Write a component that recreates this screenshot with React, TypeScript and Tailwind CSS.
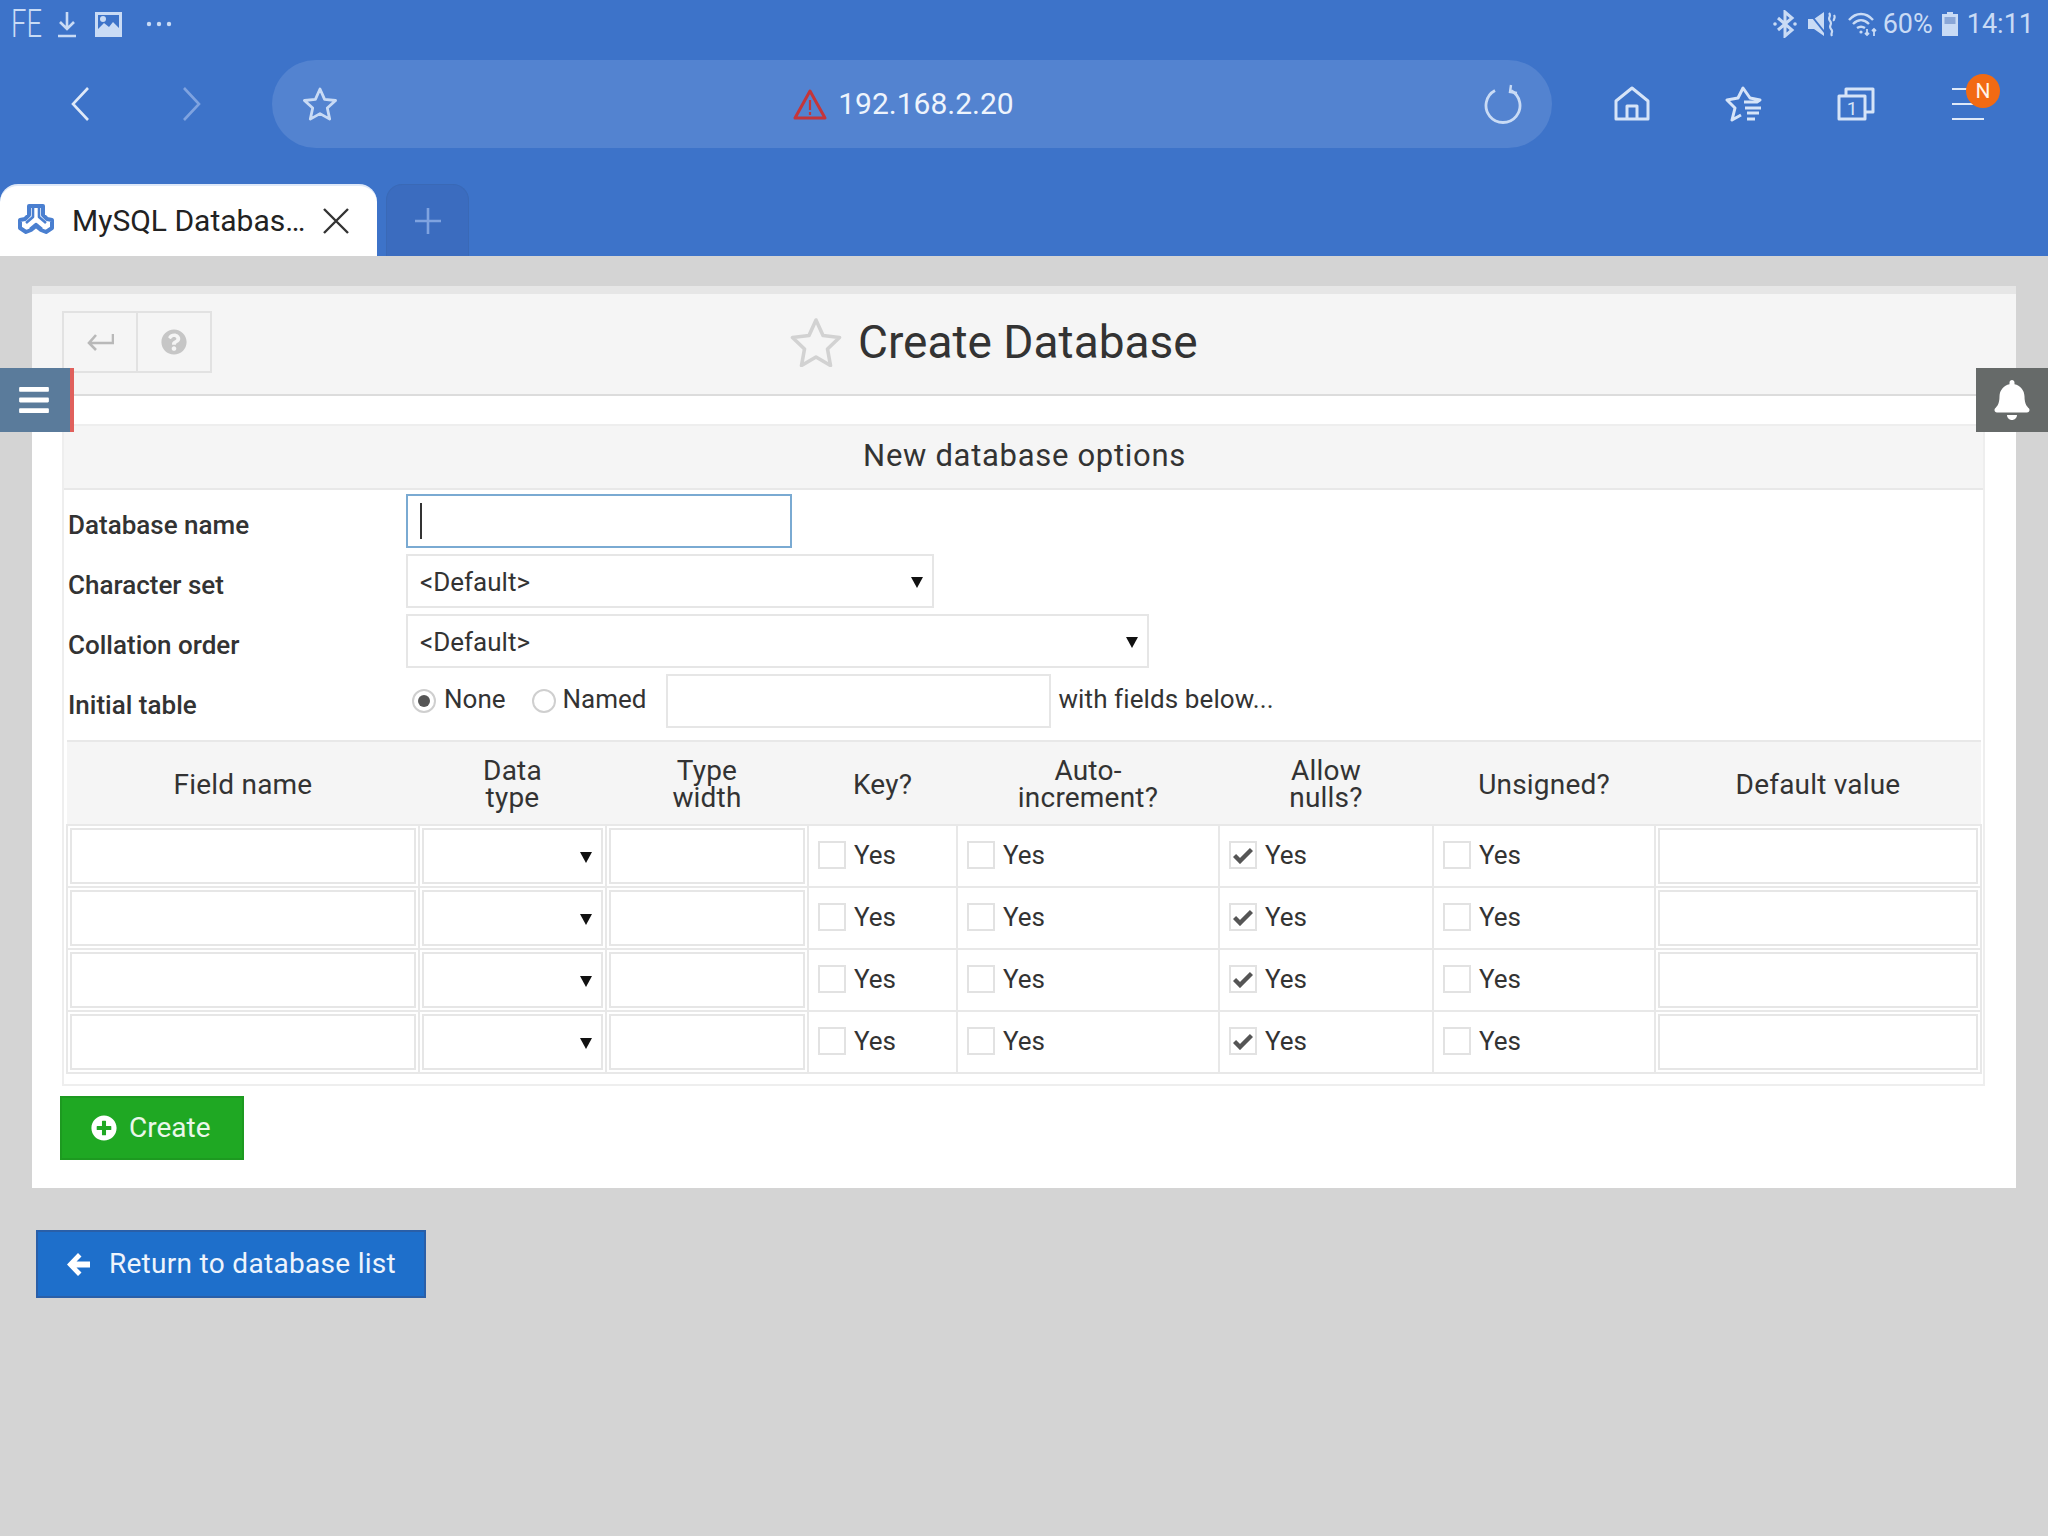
import { FaBars, FaBell, FaPlusCircle, FaQuestionCircle } from "react-icons/fa";

const ICON = "#c9dbf5";

function SelectBox({ text, className }: { text?: string; className: string }) {
    return (
        <div className={`flex items-center justify-between border-2 border-[#e6e6e6] bg-white pl-3 pr-[9px] ${className}`}>
            <span className="mt-[2px] text-[26px] text-[#333]">{text}</span>
            <svg width="12" height="11" viewBox="0 0 12 11" className="mt-[3px]"><path d="M0 0h12L6 11z" fill="#111" /></svg>
        </div>
    );
}

function Yes({ checked }: { checked?: boolean }) {
    return (
        <div className="flex items-center gap-[8px] pb-[2px] pl-[9px]">
            <span className="flex h-[28px] w-[28px] items-center justify-center border-2 border-[#e2e2e2] bg-white">
                {checked && (
                    <svg width="20" height="17" viewBox="0 0 20 17" fill="none" stroke="#555" strokeWidth="4.4"><path d="M1.500 8.500l5.500 5.500L18.500 2.500" /></svg>
                )}
            </span>
            <span className="text-[26px] text-[#333]">Yes</span>
        </div>
    );
}

function Row() {
    return (
        <tr className="h-[62px]">
            <td className="border-2 border-[#e8e8e8] p-[2px]"><input className="block h-[56px] w-full border-2 border-[#e6e6e6] bg-white" /></td>
            <td className="border-2 border-[#e8e8e8] p-[2px]"><SelectBox className="h-[56px] w-full" /></td>
            <td className="border-2 border-[#e8e8e8] p-[2px]"><input className="block h-[56px] w-full border-2 border-[#e6e6e6] bg-white" /></td>
            <td className="border-2 border-[#e8e8e8]"><Yes /></td>
            <td className="border-2 border-[#e8e8e8]"><Yes /></td>
            <td className="border-2 border-[#e8e8e8]"><Yes checked /></td>
            <td className="border-2 border-[#e8e8e8]"><Yes /></td>
            <td className="border-2 border-[#e8e8e8] p-[2px]"><input className="block h-[56px] w-full border-2 border-[#e6e6e6] bg-white" /></td>
        </tr>
    );
}

function Head({ children }: { children: React.ReactNode }) {
    return <th className="border-y-2 border-[#e8e8e8] pt-[2px] text-center text-[28px] leading-[27px] font-normal tracking-[0.2px] text-[#333]">{children}</th>;
}

function StatusBar() {
    return (
        <div className="flex h-[48px] items-center justify-between pl-[11px] pr-[14px] text-[#c9dbf5]">
            <div className="flex items-center">
                <span className="w-[32px] origin-left scale-x-[0.72] text-[38px] leading-none font-light">FE</span>
                <svg width="22" height="28" viewBox="0 0 22 28" className="ml-[13px]" fill="none" stroke={ICON} strokeWidth="2.6">
                    <path d="M11 2v17M4 12l7 7 7-7M2 26h18" />
                </svg>
                <svg width="27" height="25" viewBox="0 0 27 25" className="ml-[17px]">
                    <path fillRule="evenodd" d="M0 0h27v25H0zM3 3v14l6-6 5 4 4-5 6 6V3z" fill={ICON} />
                    <circle cx="8" cy="7" r="3" fill={ICON} />
                </svg>
                <svg width="26" height="6" viewBox="0 0 26 6" className="ml-[24px]" fill={ICON}>
                    <circle cx="3" cy="3" r="2.2" /><circle cx="13" cy="3" r="2.2" /><circle cx="23" cy="3" r="2.2" />
                </svg>
            </div>
            <div className="flex items-center">
                <svg width="24" height="28" viewBox="0 0 24 28" fill="none" stroke={ICON} strokeWidth="3">
                    <path d="M5 8l14 12-7 6V2l7 6L5 20" />
                    <circle cx="2" cy="14" r="1.8" fill={ICON} stroke="none" /><circle cx="22" cy="14" r="1.8" fill={ICON} stroke="none" />
                </svg>
                <svg width="28" height="28" viewBox="0 0 28 28" className="ml-[11px]" fill="none">
                    <path d="M0 9h6l10-7v24l-10-7H0z" fill={ICON} />
                    <path d="M2 4l16 20" stroke="#3d73c9" strokeWidth="2" />
                    <path d="M21 3c3 3-2 5 1 8s-2 5 1 8-1 4 1 7M26 5c2 3-1 4 0 6" stroke={ICON} strokeWidth="2.2" />
                </svg>
                <svg width="32" height="26" viewBox="0 0 32 26" className="ml-[12px]" fill="none" stroke={ICON} strokeWidth="2.4">
                    <path d="M1 9c7-8 17-8 24 0M5 13c5-5 11-5 16 0M9 17c3-2 5-2 8 0" />
                    <circle cx="13" cy="21" r="1.6" fill={ICON} stroke="none" />
                    <path d="M19 18v6M17 22l2 2 2-2M26 25v-7M24 20l2-2 2 2" strokeWidth="1.8" />
                </svg>
                <span className="ml-[3px] text-[27px] leading-none">60%</span>
                <svg width="16" height="24" viewBox="0 0 16 24" className="ml-[9px]">
                    <path d="M5 0h6v2h5v22H0V2h5z" fill={ICON} />
                    <rect x="2.500" y="5" width="11" height="7" fill="#8aa7d8" />
                </svg>
                <span className="ml-[9px] text-[27px] leading-none">14:11</span>
            </div>
        </div>
    );
}

function AddressRow() {
    return (
        <div className="mt-[12px] flex h-[88px] items-center px-6">
            <div className="flex w-[112px] justify-center">
                <svg width="22" height="36" viewBox="0 0 22 36" fill="none" stroke="#dfe9f8" strokeWidth="2.6"><path d="M19 2L4 18l15 16" /></svg>
            </div>
            <div className="flex w-[112px] justify-center">
                <svg width="22" height="36" viewBox="0 0 22 36" fill="none" stroke="#7fa3e0" strokeWidth="2.6"><path d="M3 2l15 16L3 34" /></svg>
            </div>
            <div className="mx-6 flex h-[88px] flex-1 items-center justify-between rounded-[44px] bg-[#5383d0] pl-[30px] pr-[30px]">
                <svg width="36" height="36" viewBox="0 0 36 36" fill="none" stroke="#c9dbf5" strokeWidth="2.8" strokeLinejoin="round">
                    <path d="M18 3l4.600 10.400 11 1.100-8.300 7.500 2.400 11.100L18 27.600 8.300 33.100l2.400-11.100-8.300-7.500 11-1.100z" />
                </svg>
                <div className="mr-[16px] flex items-center">
                    <svg width="36" height="32" viewBox="0 0 36 32" fill="none" stroke="#c4353a" strokeWidth="3" strokeLinejoin="round">
                        <path d="M18 3l15 27H3z" />
                        <path d="M18 12v10M18 24v3" strokeWidth="2.2" />
                    </svg>
                    <span className="ml-[10px] text-[30px] leading-none text-[#eef4fc]">192.168.2.20</span>
                </div>
                <svg width="38" height="40" viewBox="0 0 38 40" fill="none" stroke="#c9dbf5" strokeWidth="2.8">
                    <path d="M11 6.500a17 17 0 1 0 16 0" />
                    <path d="M27 1l-1 7 7 1" strokeWidth="2.4" />
                </svg>
            </div>
            <div className="flex w-[112px] justify-center">
                <svg width="36" height="36" viewBox="0 0 36 36" fill="none" stroke="#d6e4f8" strokeWidth="3" strokeLinejoin="round">
                    <path d="M2 33V15L18 2l16 13v18zM13 33V20h10v13" />
                </svg>
            </div>
            <div className="flex w-[112px] justify-center">
                <svg width="38" height="36" viewBox="0 0 38 36" fill="none" stroke="#d6e4f8" strokeWidth="3" strokeLinejoin="round">
                    <path d="M19 16h13l3-2-10-2L18 2l-5 10-11 2 8 8-3 12 9-5" />
                    <path d="M20 22h16M22 27h12M22 33h8" />
                </svg>
            </div>
            <div className="flex w-[112px] justify-center">
                <svg width="38" height="34" viewBox="0 0 38 34" fill="none" stroke="#d6e4f8" strokeWidth="3" strokeLinejoin="round">
                    <path d="M9 8V2h27v23h-8" />
                    <rect x="2" y="9" width="26" height="23" />
                    <text x="15" y="28" fontSize="19" textAnchor="middle" fill="#d6e4f8" stroke="none" fontFamily="Roboto, sans-serif">1</text>
                </svg>
            </div>
            <div className="relative flex w-[112px] justify-center">
                <div className="flex h-[32px] w-[32px] flex-col justify-between">
                    <span className="h-[2px] w-full bg-[#dfe9f8]" />
                    <span className="h-[2px] w-full bg-[#dfe9f8]" />
                    <span className="h-[2px] w-full bg-[#dfe9f8]" />
                </div>
                <span className="absolute left-[54px] top-[-14px] flex h-[34px] w-[34px] items-center justify-center rounded-full bg-[#f26a13] text-[21px] leading-none text-[#fff4ea]">N</span>
            </div>
        </div>
    );
}

function TabRow() {
    return (
        <div className="mt-[36px] flex h-[72px] items-end">
            <div className="flex h-[72px] w-[377px] items-center rounded-t-[18px] border-t-2 border-[#dfe9f8] bg-white pl-[18px]">
                <svg width="36" height="36" viewBox="0 0 36 36" fill="none" stroke="#4a7fd0" strokeWidth="4" strokeLinejoin="round">
                    <path d="M11 3h14v9l4 4 5 1v8l-6 4-5-2-5-4-5 4-5 2-6-4v-8l5-1 4-4z" />
                    <path d="M15 5v9l-7 6M21 5v9l7 6M12 26l6-5 6 5" strokeWidth="2.6" />
                </svg>
                <span className="ml-[18px] w-[250px] text-[30px] leading-none text-[#222]">MySQL Databas…</span>
                <svg width="28" height="28" viewBox="0 0 28 28" fill="none" stroke="#333" strokeWidth="2.4"><path d="M2 2l24 24M26 2L2 26" /></svg>
            </div>
            <div className="ml-[9px] flex h-[72px] w-[83px] items-center justify-center rounded-t-[16px] border border-b-0 border-[#3a69b6] bg-[#3b6cbf]">
                <svg width="28" height="28" viewBox="0 0 28 28" fill="none" stroke="#7fa3e0" strokeWidth="2.6"><path d="M14 1v26M1 14h26" /></svg>
            </div>
        </div>
    );
}

export default function App() {
    return (
        <div className="relative min-h-[1536px] w-[2048px] overflow-hidden bg-[#d4d4d4] font-['Roboto',sans-serif] text-[#333]">
            <div className="h-[256px] bg-[#3d73c9]">
                <StatusBar />
                <AddressRow />
                <TabRow />
            </div>

            {/* side tabs sit over the panel */}
            <div className="absolute left-0 top-[368px] flex h-[64px] w-[74px] items-center border-r-[4px] border-[#e0605c] bg-[#5a7b9b] pl-[17px]">
                <FaBars className="text-[34px] text-white" />
            </div>
            <div className="absolute right-0 top-[368px] flex h-[64px] w-[72px] items-center justify-center bg-[#666a69]">
                <FaBell className="text-[40px] text-white" />
            </div>

            <div className="mx-8 mt-[30px] border-t-[8px] border-[#e6e6e6] bg-white pb-[28px]">
                <div className="flex h-[102px] items-center border-b-2 border-[#dcdcdc] bg-[#f5f5f5] pb-[4px] pl-[30px]">
                    <div className="flex h-[62px] w-[150px] border-2 border-[#e2e2e2]">
                        <div className="flex w-[74px] items-center justify-center border-r-2 border-[#e2e2e2]">
                            <svg width="28" height="20" viewBox="0 0 28 20" fill="none" stroke="#b9b9b9" strokeWidth="2.6"><path d="M27 2v9H3M10 3l-7 8 7 7" /></svg>
                        </div>
                        <div className="flex flex-1 items-center justify-center">
                            <FaQuestionCircle className="text-[26px] text-[#c6c6c6]" />
                        </div>
                    </div>
                    <svg width="52" height="50" viewBox="0 0 52 50" className="ml-[578px]" fill="none" stroke="#d2d2d2" strokeWidth="3.6" strokeLinejoin="round">
                        <path d="M26 3l7 15.500 16.500 2-12 11.500 3 16.500L26 40l-14.500 8.500 3-16.500-12-11.500 16.500-2z" />
                    </svg>
                    <h1 className="ml-[16px] text-[46px] leading-none font-normal text-[#333]">Create Database</h1>
                </div>

                <div className="ml-[30px] mr-[31px] mt-[28px] border-2 border-[#eeeeee] pb-[10px]">
                    <div className="flex h-[64px] items-center justify-center border-b-2 border-[#e8e8e8] bg-[#f5f5f5] pb-[2px] pl-[2px] text-[31px] tracking-[0.7px] text-[#333]">
                        New database options
                    </div>
                    <div className="mt-[4px] grid grid-cols-[338px_1fr] gap-y-[6px] pl-[4px]">
                        <div className="mt-[8px] flex items-center text-[26px] font-medium">Database name</div>
                        <div className="flex h-[54px] w-[386px] items-center border-2 border-[#7aaad2] bg-white pl-[12px]">
                            <span className="h-[36px] w-[2px] bg-[#333]" />
                        </div>
                        <div className="mt-[8px] flex items-center text-[26px] font-medium">Character set</div>
                        <SelectBox text="<Default>" className="h-[54px] w-[528px]" />
                        <div className="mt-[8px] flex items-center text-[26px] font-medium">Collation order</div>
                        <SelectBox text="<Default>" className="h-[54px] w-[743px]" />
                        <div className="mt-[8px] flex items-center text-[26px] font-medium">Initial table</div>
                        <div className="flex h-[54px] items-center">
                            <span className="ml-[6px] flex h-[24px] w-[24px] items-center justify-center rounded-full border-2 border-[#cfcfcf] bg-white">
                                <span className="h-[12px] w-[12px] rounded-full bg-[#555]" />
                            </span>
                            <span className="ml-[8px] -mt-1 text-[26px]">None</span>
                            <span className="ml-[26px] h-[24px] w-[24px] rounded-full border-2 border-[#cfcfcf] bg-white" />
                            <span className="ml-[7px] -mt-1 text-[26px]">Named</span>
                            <input className="ml-[20px] h-[54px] w-[385px] border-2 border-[#e6e6e6] bg-white" />
                            <span className="ml-[7px] -mt-1 text-[26px] tracking-[0.1px]">with fields below...</span>
                        </div>
                    </div>

                    <table className="ml-[2px] mt-[12px] w-[1914px] table-fixed border-collapse">
                        <colgroup>
                            <col className="w-[352px]" />
                            <col className="w-[187px]" />
                            <col className="w-[202px]" />
                            <col className="w-[149px]" />
                            <col className="w-[262px]" />
                            <col className="w-[214px]" />
                            <col className="w-[222px]" />
                            <col className="w-[326px]" />
                        </colgroup>
                        <thead>
                            <tr className="h-[84px] bg-[#f5f5f5]">
                                <Head>Field name</Head>
                                <Head>Data<br />type</Head>
                                <Head>Type<br />width</Head>
                                <Head>Key?</Head>
                                <Head>Auto-<br />increment?</Head>
                                <Head>Allow<br />nulls?</Head>
                                <Head>Unsigned?</Head>
                                <Head>Default value</Head>
                            </tr>
                        </thead>
                        <tbody>
                            <Row />
                            <Row />
                            <Row />
                            <Row />
                        </tbody>
                    </table>
                </div>

                <button className="ml-[28px] mt-[10px] flex h-[64px] w-[184px] items-center gap-[12px] border-2 border-[#1d9a20] bg-[#1fa823] pl-[29px] text-[28px] text-[#eaf7ea]">
                    <FaPlusCircle className="text-[26px] text-white" />
                    Create
                </button>
            </div>

            <button className="ml-[36px] mt-[42px] flex h-[68px] w-[390px] items-center justify-center gap-[18px] border-2 border-[#2a5fa8] bg-[#1e6fcb] text-[28px] tracking-[0.3px] text-[#eef4fc]">
                <svg width="25" height="25" viewBox="0 0 25 25" fill="#fff"><path d="M12 1L1 12.500 12 24l3.500-3.500-5-5H24v-6H10.500l5-5z" /></svg>
                Return to database list
            </button>
        </div>
    );
}
